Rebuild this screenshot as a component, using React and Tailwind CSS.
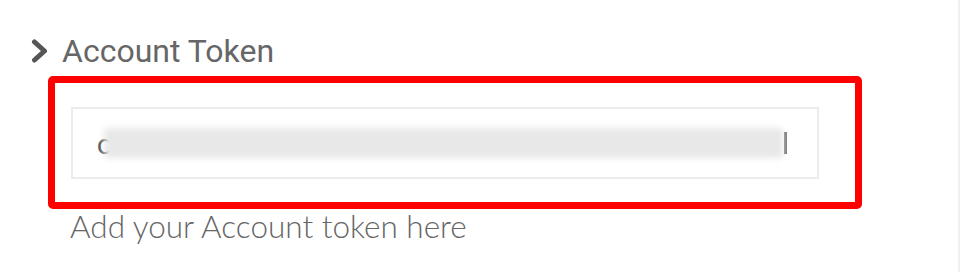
import React from 'react';

function Chevron() {
  return (
    <svg width="18" height="26" viewBox="0 0 18 26" className="shrink-0">
      <path d="M3.5 4 L13.5 13 L3.5 22" fill="none" stroke="#555" strokeWidth="5" strokeLinecap="round" strokeLinejoin="round" />
    </svg>
  );
}

export default function App() {
  return (
    <div className="w-[970px] h-[272px] bg-white overflow-hidden flex">
      <div className="w-[958px] pl-[31px] pt-[36px]">
        <div className="flex items-center gap-[13px] h-[30px]">
          <Chevron />
          <span className="text-[32px] leading-none text-[#666] font-['Roboto',sans-serif]">Account Token</span>
        </div>
        <div className="ml-[17px] mt-[10px] w-[814px] h-[133px] border-[7px] border-[#ff0000] rounded-[5px] pl-[16px] pt-[24px]">
          <div className="w-[748px] h-[72px] border-2 border-[#ececec] flex items-center pl-[24px] pr-[30px]">
            <span className="text-[28px] text-[#555] font-['Lato',sans-serif] leading-none">c</span>
            <div className="flex-1 h-[30px] -ml-[6px] bg-[#e8e8e8] blur-[3px] rounded-sm" />
            <span className="w-[3px] h-[22px] bg-[#777] ml-[1px]" />
          </div>
        </div>
        <div className="ml-[39px] -mt-[1px] text-[31.5px] leading-[36px] font-light text-[#666] font-['Lato',sans-serif]">
          Add your Account token here
        </div>
      </div>
      <div className="w-[2px] h-full bg-[#f0f0f0]" />
    </div>
  );
}
